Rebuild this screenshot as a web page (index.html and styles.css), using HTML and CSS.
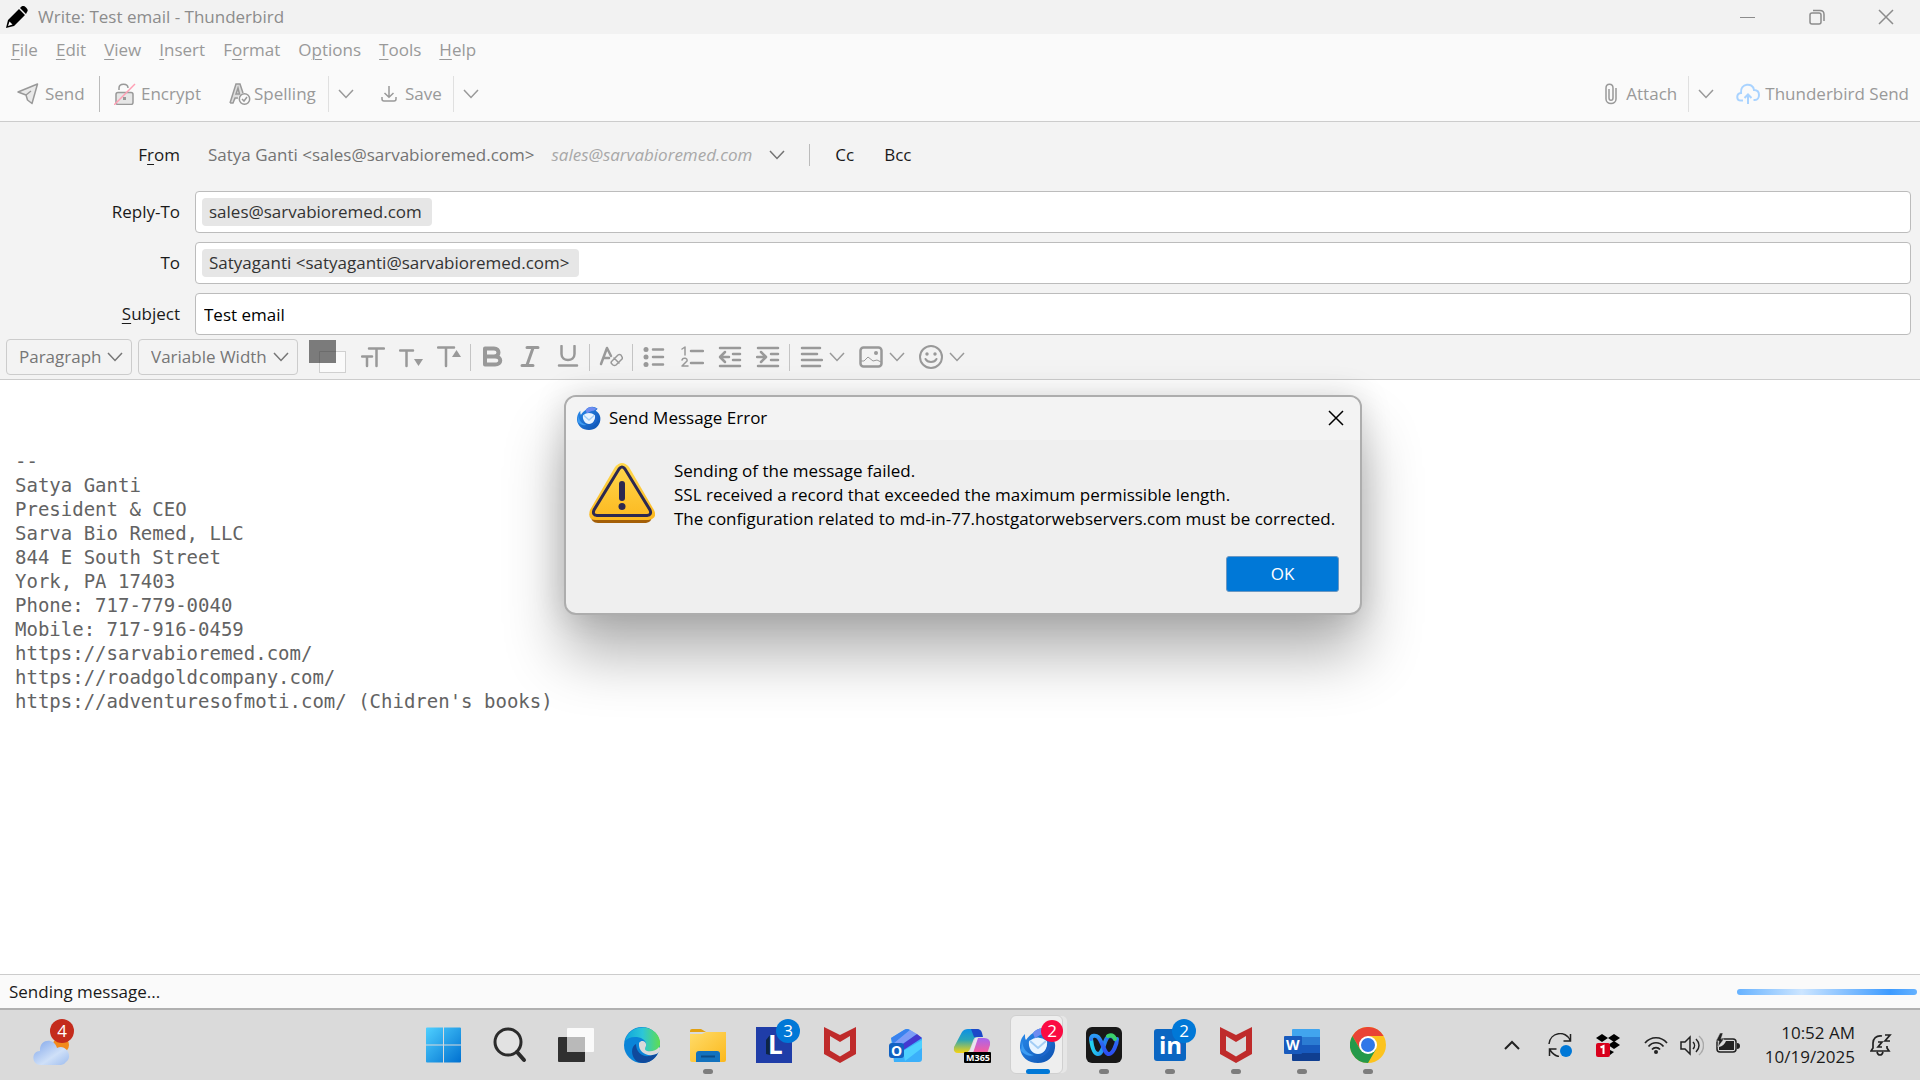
FILE: index.html
```html
<!DOCTYPE html>
<html lang="en">
<head>
<meta charset="utf-8">
<title>Write: Test email - Thunderbird</title>
<link rel="stylesheet" href="styles.css">
</head>
<body>
<svg class="defs" aria-hidden="true">
  <defs>
    <linearGradient id="tbBlue" x1="0" y1="0" x2="1" y2="1"><stop offset="0" stop-color="#2a8ef0"/><stop offset="1" stop-color="#0c4fae"/></linearGradient>
    <linearGradient id="winBlue" x1="0" y1="0" x2="1" y2="1"><stop offset="0" stop-color="#4fd0ff"/><stop offset="1" stop-color="#0070d0"/></linearGradient>
    <linearGradient id="cloudFill" x1="0" y1="0" x2="1" y2="1"><stop offset="0" stop-color="#7fa5ea"/><stop offset=".6" stop-color="#cfe0f8"/><stop offset="1" stop-color="#9dbcee"/></linearGradient>
    <linearGradient id="folderFill" x1="0" y1="0" x2="1" y2="1"><stop offset="0" stop-color="#ffdc6a"/><stop offset="1" stop-color="#fbb81c"/></linearGradient>
    <linearGradient id="edgeTop" x1="0" y1="0" x2="1" y2="0"><stop offset="0" stop-color="#0fa5dc"/><stop offset=".5" stop-color="#2cc6d8"/><stop offset="1" stop-color="#5fdd50"/></linearGradient>
    <linearGradient id="copLeft" x1="0" y1="0" x2="0" y2="1"><stop offset="0" stop-color="#0c8fe6"/><stop offset=".45" stop-color="#2aa6b8"/><stop offset="1" stop-color="#f8d40e"/></linearGradient>
    <linearGradient id="copRight" x1="0" y1="0" x2="0" y2="1"><stop offset="0" stop-color="#a565f0"/><stop offset=".6" stop-color="#ee5ea6"/><stop offset="1" stop-color="#fb9060"/></linearGradient>
    <linearGradient id="webexLeft" x1="0" y1="0" x2="1" y2="0"><stop offset="0" stop-color="#22d3ee"/><stop offset="1" stop-color="#2549ee"/></linearGradient>
    <linearGradient id="webexRight" x1="0" y1="0" x2="0" y2="1"><stop offset="0" stop-color="#2c9cf5"/><stop offset=".4" stop-color="#2c66f5"/><stop offset="1" stop-color="#2c4ff2"/></linearGradient>
    <linearGradient id="warnFill" x1="0" y1="0" x2="0" y2="1"><stop offset="0" stop-color="#ffd84e"/><stop offset="1" stop-color="#fcb81f"/></linearGradient>
  </defs>
  <symbol id="chevron" viewBox="0 0 16 10"><path d="M1 1l7 7.500 7-7.500" fill="none" stroke="currentColor" stroke-width="1.500"/></symbol>
  <symbol id="cross" viewBox="0 0 16 16"><path d="M1 1l14 14M15 1L1 15" fill="none" stroke="currentColor" stroke-width="1.500"/></symbol>
  <symbol id="thunderbird" viewBox="0 0 36 36">
    <path d="M13 6C16 2 22 0 27 2l4 2-3 3c5 3 8 8 7 14-1 9-8 15-17 15C8 36 1 30 0 21c0-6 1-10 5-14 0 3 0 5 1 6 2-3 4-5 7-7z" fill="url(#tbBlue)"/>
    <path d="M13 6c3-4 9-6 14-3l3 1-5 3c-4 0-8 2-10 5z" fill="#6f8cf0"/>
    <path d="M2 14c1 8 5 13 12 14-4 2-9 0-13-4z" fill="#3d9cf2"/>
    <path d="M9 14q9-7 18 0c1 7-3 13-9 13S8 21 9 14z" fill="#e8f4ff"/>
    <path d="M10 14l8 7 8-7" fill="none" stroke="#a3cdf5" stroke-width="2"/>
    <path d="M29 10c4 8 1 18-10 20 5-3 9-8 10-20z" fill="#1d66cc"/>
  </symbol>
  <symbol id="shield" viewBox="0 0 32 36"><path d="M0 0l16 8L32 0v27L16 36 0 27z" fill="#bf2b2b"/><path d="M6 9l10 6 10-6v14.500L16 29.500 6 23.500z" fill="#dadada"/></symbol>
</svg>

<main class="window">
  <header class="titlebar">
    <svg class="pen" viewBox="0 0 22 22"><path d="M0 22l2-8L13 3l6 6L8 20zM14 2l1.500-1.500c1-1 3-.5 4 .5l1 1c1.500 1.500 1.500 3 .5 4L20 8z"/><path d="M2 20l1.500-4.500 3 3z" fill="#fff"/></svg>
    <h1>Write: Test email - Thunderbird</h1>
    <div class="controls">
      <button aria-label="Minimize"><svg width="16" height="16" viewBox="0 0 16 16"><path d="M0 8.500h15" stroke="currentColor"/></svg></button>
      <button aria-label="Restore"><svg width="16" height="16" viewBox="0 0 16 16" fill="none" stroke="currentColor" stroke-width="1.500"><rect x="1" y="4" width="11" height="11" rx="2"/><path d="M4 1.500h7c2.500 0 4 1.500 4 4V12"/></svg></button>
      <button aria-label="Close"><svg width="16" height="16"><use href="#cross"/></svg></button>
    </div>
  </header>

  <nav class="menubar">
    <button><u>F</u>ile</button><button><u>E</u>dit</button><button><u>V</u>iew</button><button><u>I</u>nsert</button><button>F<u>o</u>rmat</button><button>O<u>p</u>tions</button><button><u>T</u>ools</button><button><u>H</u>elp</button>
  </nav>

  <div class="toolbar">
    <button class="tool send"><svg width="22" height="22" viewBox="0 0 22 22" fill="#e9e9e9" stroke="currentColor" stroke-width="1.500" stroke-linejoin="round"><path d="M1 9L20.500 1 15 20.500 10.500 17 9 12z"/><path d="M9 12l5-4" /></svg>Send</button>
    <button class="tool encrypt"><svg width="22" height="22" viewBox="0 0 22 22" fill="none" stroke="currentColor" stroke-width="1.500"><path d="M5 7V5c0-5 9-5 9 0"/><rect x="2" y="9.500" width="17" height="12" rx="2" fill="#e6e6e6"/><path d="M10.500 14v3" stroke-width="3"/><path d="M0 22L21 1" stroke="#ff9fb4"/></svg>Encrypt</button>
    <button class="tool spelling"><svg width="22" height="22" viewBox="0 0 22 22" fill="none" stroke="currentColor" stroke-width="1.500"><path d="M1 20L7 1h4l3 9M1 20h3l2-5h3M7 11l2-6 1.500 6z" fill="#ddd"/><circle cx="15.500" cy="16" r="5.200" fill="#fafafa"/><path d="M13 16l2 2 3-4"/></svg>Spelling</button>
    <button class="drop" aria-label="Spelling options"><svg class="chev"><use href="#chevron"/></svg></button>
    <button class="tool save"><svg width="16" height="16" viewBox="0 0 16 16" fill="none" stroke="currentColor" stroke-width="1.500"><path d="M8 0v11M3.500 7L8 11.200 12.500 7M1 11v2q0 2 2 2h10q2 0 2-2v-2"/></svg>Save</button>
    <button class="drop" aria-label="Save options"><svg class="chev"><use href="#chevron"/></svg></button>
    <span class="spring"></span>
    <button class="tool attach"><svg width="12" height="22" viewBox="0 0 12 22" fill="none" stroke="currentColor" stroke-width="1.500"><path d="M11 5v11c0 6-10 6-10 0V5c0-5 7-5 7 0v10c0 3-4 3-4 0V6"/></svg>Attach</button>
    <button class="drop attach-drop" aria-label="Attach options"><svg class="chev"><use href="#chevron"/></svg></button>
    <button class="tool cloud"><svg width="24" height="22" viewBox="0 0 24 22" fill="none" stroke="#a9d3ff" stroke-width="2"><path d="M7 17.500H5c-5 0-5-7 0-7.500C4 0 17 -1 18 7c7 0 6 10 1 10h-1.500M12 21V12M8.500 15l3.500-3.500 3.500 3.500"/></svg>Thunderbird Send</button>
  </div>

  <section class="addressing">
    <div class="row from">
      <label for="from">F<u>r</u>om</label>
      <div class="fromline">
        <button id="from" class="identity" aria-haspopup="listbox">Satya Ganti &lt;sales@sarvabioremed.com&gt; <i>sales@sarvabioremed.com</i><svg class="chev"><use href="#chevron"/></svg></button>
        <span class="bar"></span>
        <button class="cc">Cc</button><button class="cc">Bcc</button>
      </div>
    </div>
    <div class="row"><label for="reply">Reply-To</label><div class="field"><span class="pill">sales@sarvabioremed.com</span><input id="reply" type="text"></div></div>
    <div class="row"><label for="to">To</label><div class="field"><span class="pill">Satyaganti &lt;satyaganti@sarvabioremed.com&gt;</span><input id="to" type="text"></div></div>
    <div class="row"><label for="subject"><u>S</u>ubject</label><input class="field subject" id="subject" type="text" value="Test email"></div>
  </section>

  <div class="format">
    <div class="pick para"><select aria-label="Paragraph format"><option>Paragraph</option></select><svg class="chev"><use href="#chevron"/></svg></div>
    <div class="pick font"><select aria-label="Font"><option>Variable Width</option></select><svg class="chev"><use href="#chevron"/></svg></div>
    <button class="swatch" aria-label="Text color"><svg width="38" height="34" viewBox="0 0 38 34"><rect x="10.500" y="11.500" width="26" height="21" fill="#fafafa" stroke="#d0d0d0"/><rect width="27" height="23" fill="#7b7b7b"/><path d="M10.500 23V11.500H27" fill="none" stroke="#6c6c6c"/></svg></button>
    <button class="fmt" aria-label="Font size"><svg viewBox="0 0 24 24"><path d="M8 3.500h15M15.500 4v17M1 11.500h10M6 12v9"/></svg></button>
    <button class="fmt" aria-label="Smaller"><svg viewBox="0 0 24 24"><path d="M1 5.500h13M7.500 6v15"/><path class="solid" d="M15 14h9l-4.500 7z"/></svg></button>
    <button class="fmt" aria-label="Larger"><svg viewBox="0 0 24 24"><path d="M1 2.500h16M9 3v18"/><path class="solid" d="M15 12h9l-4.500-7z"/></svg></button>
    <span class="sep"></span>
    <button class="fmt" aria-label="Bold"><svg viewBox="0 0 24 24"><path d="M5 3.500h9c6 0 6 8 0 8H5zM5 11.500h10c7 0 7 8 0 8H5z" stroke-width="4"/></svg></button>
    <button class="fmt" aria-label="Italic"><svg viewBox="0 0 24 24"><path d="M9 2.500h11M4 20.500h11M15 3L9 20" stroke-width="3"/></svg></button>
    <button class="fmt" aria-label="Underline"><svg viewBox="0 0 24 24"><path d="M5.500 1v8c0 8 13 8 13 0V1M3 20.500h18"/></svg></button>
    <span class="sep"></span>
    <button class="fmt" aria-label="Remove styling"><svg viewBox="0 0 24 24"><path d="M2 19L8 3l4 8M5 13h5"/><path d="M13 16l6-6q1.500-1 3 0l1 2q1 1 0 2l-6 6q-1.500 1-3 0l-1.500-1.500q-1-1.200.5-2.500zM15 13l5 5" stroke-width="1.500"/></svg></button>
    <span class="sep"></span>
    <button class="fmt" aria-label="Bulleted list"><svg viewBox="0 0 24 24"><path d="M11 4.500h10M11 12h10M11 19.500h10"/><g class="solid"><circle cx="4" cy="4.500" r="2.500"/><circle cx="4" cy="12" r="2.500"/><circle cx="4" cy="19.500" r="2.500"/></g></svg></button>
    <button class="fmt" aria-label="Numbered list"><svg viewBox="0 0 24 24"><path d="M11 6h12M11 18h12"/><path d="M2 4l3-2v8M2 15c1-3 6-2 5 1l-5 5h6" stroke-width="1.500"/></svg></button>
    <button class="fmt" aria-label="Outdent"><svg viewBox="0 0 24 24"><path d="M2 3h20M15 9h7M15 15h7M2 21h20M3 12h8M7 7l-5 5 5 5"/></svg></button>
    <button class="fmt" aria-label="Indent"><svg viewBox="0 0 24 24"><path d="M2 3h20M15 9h7M15 15h7M2 21h20M1 12h8M5 7l5 5-5 5"/></svg></button>
    <span class="sep"></span>
    <button class="fmt wide" aria-label="Align"><svg viewBox="0 0 24 24"><path d="M3 3h18M3 9h15M3 15h20M3 21h18"/></svg><svg class="chev"><use href="#chevron"/></svg></button>
    <button class="fmt wide" aria-label="Insert image"><svg viewBox="0 0 24 24"><rect x="1.500" y="2.500" width="21" height="19" rx="3"/><circle class="solid" cx="17" cy="8" r="2"/><path d="M2 16h3l4-4 5 4 4-1 4 2" stroke-width="1"/></svg><svg class="chev"><use href="#chevron"/></svg></button>
    <button class="fmt wide" aria-label="Insert smiley"><svg viewBox="0 0 24 24"><circle cx="12" cy="12" r="11" stroke-width="2"/><path d="M6.500 14c2 4 9 4 11 0" stroke-width="2"/><g class="solid"><circle cx="8" cy="9" r="1.700"/><circle cx="16" cy="9" r="1.700"/></g></svg><svg class="chev"><use href="#chevron"/></svg></button>
  </div>

  <article class="message">
<pre>--
Satya Ganti
President &amp; CEO
Sarva Bio Remed, LLC
844 E South Street
York, PA 17403
Phone: 717-779-0040
Mobile: 717-916-0459
https://sarvabioremed.com/
https://roadgoldcompany.com/
https://adventuresofmoti.com/ (Chidren's books)</pre>
  </article>

  <footer class="status"><span>Sending message...</span><div class="progress" role="progressbar" aria-label="Sending"></div></footer>
</main>

<dialog class="alert" open aria-labelledby="alert-title">
  <header><svg width="26" height="24"><use href="#thunderbird"/></svg><h2 id="alert-title">Send Message Error</h2><button aria-label="Close"><svg width="16" height="16"><use href="#cross"/></svg></button></header>
  <div class="alert-body">
    <svg width="66" height="64" viewBox="0 0 66 64"><path d="M33 4L62 52q2 7-5 8H9q-7 0-7-7z" fill="#a45f07"/><path d="M26 4q7-8 14 0l25 43q4 9-6 10H7q-9 0-6-10z" fill="url(#warnFill)"/><path d="M30 6q3-4 6 0l25 41q2 5-3 5.500H8q-5-.5-3-5.500z" fill="none" stroke="#2c2850" stroke-width="3"/><path d="M33 21v14" stroke="#2c2850" stroke-width="6" stroke-linecap="round"/><circle cx="33" cy="43.500" r="3.500" fill="#2c2850"/></svg>
    <p>Sending of the message failed.<br>SSL received a record that exceeded the maximum permissible length.<br>The configuration related to md-in-77.hostgatorwebservers.com must be corrected.</p>
  </div>
  <div class="alert-actions"><button>OK</button></div>
</dialog>

<footer class="taskbar">
  <button class="weather" aria-label="Weather"><svg width="38" height="30" viewBox="0 0 38 30"><circle cx="28" cy="10" r="8" fill="#f28a1c"/><path d="M8 30C-2 30-2 16 7 16 6 4 21 2 24 13c8-5 17 8 9 14q-2 3-5 3z" fill="url(#cloudFill)"/></svg><span class="badge red">4</span></button>
  <nav class="apps">
    <button aria-label="Start"><svg width="36" height="36" viewBox="0 0 36 36"><path d="M0 1.500q0-1 1-1h16v17H0zM18 .5h16q1 0 1 1v16H18zM0 18.500h17v17H1q-1 0-1-1zM18 18.500h17v16q0 1-1 1H18z" fill="url(#winBlue)"/></svg></button>
    <button aria-label="Search"><svg width="36" height="36" viewBox="0 0 36 36" fill="none" stroke="#2b2b2b"><circle cx="16" cy="15" r="13" stroke-width="3" fill="#e2e2e2"/><path d="M25 25l7 8" stroke-width="4" stroke-linecap="round"/></svg></button>
    <button aria-label="Task view"><svg width="36" height="36" viewBox="0 0 36 36"><rect y="10" width="27" height="25" rx="1" fill="#303030"/><rect x="9" y="1" width="27" height="24" rx="1" fill="#fafafa"/><rect x="9" y="10" width="18" height="15" fill="#b9b9b9"/></svg></button>
    <button aria-label="Edge"><svg width="36" height="36" viewBox="0 0 36 36"><circle cx="18" cy="18" r="18" fill="#0a84d8"/><path d="M1 14C4 3 14-1 23 1c9 2 14 10 13 17-1 6-8 8-14 6-3-1-1-3 0-5 1-6-5-9-11-9-5 0-8 2-10 4z" fill="url(#edgeTop)"/><path d="M12 17c0 8 6 13 13 12 4-1 7-2 9-3-4 8-12 12-20 9-7-4-8-15-2-18z" fill="#104a9c"/><path d="M15 16c3-4 8-1 7 3-1 2-2 4 1 5 4 1 9 0 12-4l1 1c0 2-1 4-2 5-8 5-20 1-19-10z" fill="#dadada"/></svg></button>
    <button class="run" aria-label="File Explorer"><svg width="36" height="36" viewBox="0 0 36 36"><path d="M0 4q0-2 2-2h9l5 3H0z" fill="#e2a011"/><path d="M0 7h12l4-2h20v28q0 2-2 2H2q-2 0-2-2z" fill="url(#folderFill)"/><path d="M6 35V27q0-3 3-3h18q3 0 3 3v8z" fill="#1272be"/><path d="M11 29.500h14" stroke="#0a4c88" stroke-width="2"/></svg></button>
    <button aria-label="L"><svg width="36" height="36" viewBox="0 0 36 36"><rect width="36" height="36" fill="#1f3da8"/><path d="M10 27V13l4-5v20z" fill="#0d2545"/><text x="12" y="27" class="letter" font-size="26">L</text></svg><span class="badge blue">3</span></button>
    <button aria-label="McAfee"><svg width="32" height="36"><use href="#shield"/></svg></button>
    <button aria-label="Outlook"><svg width="36" height="36" viewBox="0 0 36 36"><path d="M3 11L16 3q3-2 6 0l12 8v21q0 3-3 3H6z" fill="#3bb0fa"/><path d="M3 11L16 3q3-2 6 0l-17 14z" fill="#3a82ee"/><path d="M5 17L22 3l7 4-20 14z" fill="#7d9cf7"/><path d="M9 21l20-14 5 4-20 13z" fill="#4538d0"/><path d="M15 24l19-11v8L17 34z" fill="#4ed0ff"/><rect x="1" y="16" width="15" height="15" rx="3" fill="#1061c2"/><text x="3" y="29" class="letter" font-size="14">O</text></svg></button>
    <button aria-label="Microsoft 365 Copilot"><svg width="38" height="36" viewBox="0 0 38 36"><path d="M9 5q2-3 6-3h9q3 0 3 4l-2 4q-4 0-5 4l-3 8q-2 4-6 4H5q-5 0-4-6z" fill="url(#copLeft)"/><path d="M18 2h6q4 0 5 4l1 4h-9z" fill="#1b48c8"/><path d="M22 11h9q7 0 6 7l-3 9q-1 5-6 5H14q3-1 4-6z" fill="url(#copRight)"/><path d="M22 11h3l-6 18h-4z" fill="#e9e4ee"/><rect x="11" y="25" width="27" height="11" rx="1" fill="#000"/><text x="13" y="34" class="letter" font-size="9">M365</text></svg></button>
    <button class="run active" aria-label="Thunderbird"><svg width="36" height="36"><use href="#thunderbird"/></svg><span class="badge crimson">2</span></button>
    <button class="run" aria-label="Webex"><svg width="36" height="36" viewBox="0 0 36 36"><rect width="36" height="36" rx="6" fill="#181818"/><g fill="none" stroke-width="4" stroke-linecap="round"><path d="M5 12C6 20 8 27 12 27c6 0 6-18 12-18 2 0 4 1 5 3" stroke="url(#webexLeft)"/><path d="M5 12c0-4 5-4 7-2 5 5 6 17 11 17 4 0 8-10 8-15" stroke="url(#webexRight)"/><path d="M22 9q5-2 7 3" stroke="#3bd26b"/></g></svg></button>
    <button class="run" aria-label="LinkedIn"><svg width="32" height="32" viewBox="0 0 32 32"><rect width="32" height="32" rx="3" fill="#0b66c2"/><text x="5" y="25" class="letter" font-size="24">in</text></svg><span class="badge blue">2</span></button>
    <button class="run" aria-label="McAfee"><svg width="32" height="36"><use href="#shield"/></svg></button>
    <button class="run" aria-label="Word"><svg width="36" height="34" viewBox="0 0 36 34"><path d="M8 9V2q0-1 1-1h26q1 0 1 1v7z" fill="#41a5ee"/><path d="M8 9h28v8H8z" fill="#2b7cd3"/><path d="M8 17h28v8H8z" fill="#185abd"/><path d="M8 25h28v7q0 1-1 1H9q-1 0-1-1z" fill="#103f91"/><rect y="8" width="18" height="18" rx="1" fill="#185abd"/><text x="2" y="22" class="letter" font-size="14">W</text></svg></button>
    <button class="run" aria-label="Chrome"><svg width="36" height="36" viewBox="0 0 36 36"><circle cx="18" cy="18" r="18" fill="#fcc31e"/><path d="M18 9h15.600A18 18 0 0 0 2.400 9l7.800 13.500z" fill="#e94335"/><path d="M2.400 9A18 18 0 0 0 18 36l7.800-13.500H10.200z" fill="#24994a"/><circle cx="18" cy="18" r="9" fill="#fff"/><circle cx="18" cy="18" r="7" fill="#3078e8"/></svg></button>
  </nav>
  <div class="tray">
    <svg class="up" width="16" height="10" viewBox="0 0 16 10" fill="none" stroke="#222" stroke-width="2"><path d="M1 9l7-7 7 7"/></svg>
    <svg class="sync" width="24" height="24" viewBox="0 0 24 24" fill="none" stroke="#222" stroke-width="1.500"><path d="M1 11C2-1 18-3 22 7M22.500 1v7h-7M2 17c2 3 5 6 9 6.500M1.500 23v-7h7"/><circle cx="18" cy="18" r="6" fill="#0078d7" stroke="none"/></svg>
    <svg class="drop-box" width="24" height="24" viewBox="0 0 24 24"><path d="M0 5l6-4 6 4-6 4zM12 5l6-4 6 4-6 4zM12 12l6-4 6 4-6 4zM14 17l4 2-4 3z"/><rect y="10" width="14" height="14" rx="2" fill="#d8001c"/><path d="M4.500 14.500l3-1.500v8" fill="none" stroke="#fff" stroke-width="2"/></svg>
    <svg class="wifi" width="24" height="24" viewBox="0 0 24 24" fill="none" stroke="#222" stroke-width="1.700"><path d="M1 10c6-7 16-7 22 0M4.500 13.500c4-5 11-5 15 0M8 16.500c2-2.500 6-2.500 8 0"/><circle cx="12" cy="19" r="2" fill="#222" stroke="none"/></svg>
    <svg class="sound" width="24" height="24" viewBox="0 0 24 24" fill="none" stroke="#222" stroke-width="1.500"><path d="M1 9h4l5-5v17l-5-5H1zM13 9c2 2 2 5 0 7M16 6c4 4 4 9 0 13"/><path d="M19 3c6 5 6 14 0 19" stroke="#aaa"/></svg>
    <svg width="24" height="24" viewBox="0 0 24 24"><rect x="1" y="6" width="19" height="13" rx="3" fill="none" stroke="#222" stroke-width="1.500"/><path d="M3 17v-3q5-1 7-6h8v9zM21 10q3 0 3 3t-3 3z" fill="#222"/><path d="M4 0L0 8h3l-1 6 6-8H5l2-6z" fill="#222" stroke="#dadada" stroke-width=".5"/></svg>
    <time datetime="2025-10-19T10:52">10:52 AM<br>10/19/2025</time>
    <svg width="22" height="22" viewBox="0 0 22 22" fill="none" stroke="#222" stroke-width="1.700"><path d="M12 2C6 1 3 5 3 9v5l-2 3h18l-2-3v-2M7 18c1 4 5 4 6 0M8 8h4l-4 5h4M15 1h5l-5 6h5"/></svg>
  </div>
</footer>
</body>
</html>
```

FILE: styles.css
```css
* { box-sizing: border-box; }

body {
  margin: 0;
  min-height: 100vh;
  display: flex;
  flex-direction: column;
  font: 17px/24px "Open Sans", "Noto Sans", sans-serif;
  color: #1a1a1a;
  background: #fff;
}

.defs { position: absolute; width: 0; height: 0; }

svg { flex: none; display: block; }

button, input, select {
  font: inherit;
  color: inherit;
  background: none;
  border: 0;
  padding: 0;
  margin: 0;
}

u { text-underline-offset: 3px; text-decoration-thickness: 1px; }

.chev { width: 16px; height: 10px; }

.window { flex: 1; display: flex; flex-direction: column; }

.titlebar {
  height: 34px;
  display: flex;
  align-items: center;
  padding-left: 6px;
  background: #f2f2f2;
  color: #8c8c8c;
}
.titlebar h1 { margin: 0 auto 0 10px; font-size: 17px; font-weight: 400; }
.pen { width: 22px; height: 22px; }
.controls { display: flex; }
.controls button { width: 69px; height: 34px; display: grid; place-items: center; }

.menubar {
  height: 32px;
  display: flex;
  align-items: center;
  gap: 18px;
  padding-left: 11px;
  background: #fafafa;
  color: #999;
}

.toolbar {
  height: 56px;
  display: flex;
  align-items: center;
  padding-right: 11px;
  background: #fafafa;
  border-bottom: 1px solid #ccc;
  color: #999;
}
.tool { height: 36px; display: flex; align-items: center; gap: 6px; }
.send { width: 100px; padding-left: 17px; border-right: 1px solid #bbb; }
.encrypt { width: 129px; padding-left: 14px; gap: 5px; }
.spelling { width: 99px; gap: 3px; }
.save { width: 80px; padding-left: 8px; gap: 8px; }
.attach { width: 83px; gap: 9px; }
.cloud { gap: 5px; }
.drop { width: 45px; height: 36px; padding-left: 9px; border-left: 1px solid #e0e0e0; }
.attach-drop { width: 48px; }
.spring { flex: 1; }

.addressing {
  display: flex;
  flex-direction: column;
  gap: 9px;
  padding-right: 9px;
  background: #f3f3f3;
}
.row { display: grid; grid-template-columns: 180px 1fr; gap: 15px; align-items: center; }
.row label { text-align: right; }
.from { height: 60px; padding-top: 6px; }
.fromline { display: flex; align-items: center; padding-left: 13px; }
.identity { display: flex; align-items: center; color: #737373; }
.identity i { margin: 0 17px; color: #a8a8a8; }
.bar { width: 1px; height: 22px; margin: 0 25px 0 24px; background: #bbb; }
.cc { margin-right: 30px; }
.field {
  height: 42px;
  min-width: 0;
  display: flex;
  align-items: center;
  padding: 0 6px;
  background: #fff;
  border: 1px solid #bcbcbc;
  border-radius: 4px;
}
.field input { flex: 1; min-width: 0; outline: 0; }
.subject { padding: 0 8px; color: #000; }
.pill { padding: 2px 10px 2px 7px; border-radius: 4px; background: #e6e6e6; color: #333; }

.format {
  height: 45px;
  display: flex;
  align-items: center;
  padding-left: 6px;
  background: #f3f3f3;
  border-bottom: 1px solid #ccc;
  color: #999;
}
.pick { display: grid; align-items: center; margin-right: 6px; color: #767676; }
.pick select {
  grid-area: 1 / 1;
  width: 100%;
  height: 36px;
  padding-left: 12px;
  appearance: none;
  border: 1px solid #ccc;
  border-radius: 4px;
}
.pick .chev { grid-area: 1 / 1; justify-self: end; margin-right: 9px; pointer-events: none; }
.para { width: 126px; }
.font { width: 160px; }
.swatch { margin: 0 7px 0 5px; }
.fmt { width: 38px; height: 38px; display: flex; align-items: center; justify-content: center; }
.fmt svg:first-child { width: 24px; height: 24px; fill: none; stroke: #999; stroke-width: 2.5; stroke-linecap: round; stroke-linejoin: round; }
.fmt .solid { fill: #999; stroke: none; }
.wide { width: 60px; gap: 6px; }
.sep { width: 1px; height: 27px; margin: 0 2px; background: #c4c4c4; }

.message { flex: 1; padding: 69px 15px 0; background: #fff; }
.message pre { margin: 0; font: 19px/24px "DejaVu Sans Mono", monospace; color: #636363; }

.status {
  height: 36px;
  display: flex;
  align-items: center;
  justify-content: space-between;
  padding: 1px 3px 0 9px;
  background: #fafafa;
  border-top: 1px solid #ccc;
  border-bottom: 2px solid #b0b0b0;
}
.progress {
  width: 180px;
  height: 6px;
  border-radius: 3px;
  background: linear-gradient(90deg, #66b2ff, #cce5ff 36%, #3d9bff 85%, #66b2ff);
}

.alert {
  position: absolute;
  left: 564px;
  top: 395px;
  margin: 0;
  padding: 0 0 21px;
  width: 798px;
  color: #000;
  background: #efefef;
  border: 2px solid #adadad;
  border-radius: 12px;
  box-shadow: 0 40px 60px rgba(0, 0, 0, .3), 0 0 32px rgba(0, 0, 0, .14);
}
.alert header {
  height: 43px;
  display: flex;
  align-items: center;
  padding: 0 16px 2px 10px;
  background: #f3f3f3;
  border-radius: 10px 10px 0 0;
}
.alert h2 { margin: 0 auto 0 7px; font-size: 17px; font-weight: 400; }
.alert-body { display: flex; gap: 19px; padding: 19px 0 0 23px; align-items: center; }
.alert-body p { margin: 0; white-space: nowrap; }
.alert-actions { display: flex; justify-content: flex-end; padding: 25px 21px 0; }
.alert-actions button {
  width: 113px;
  height: 36px;
  color: #fff;
  background: #0078d7;
  border: 1px solid #6a97c2;
  border-radius: 3px;
}

.taskbar { height: 70px; display: flex; align-items: center; padding-bottom: 1px; background: #dadada; }
.weather { position: relative; width: 411px; height: 48px; padding: 10px 0 0 33px; }
.apps { display: flex; }
.apps button { position: relative; width: 66px; height: 60px; display: grid; place-items: center; }
.run::after {
  content: "";
  position: absolute;
  bottom: 1px;
  left: 28px;
  width: 10px;
  height: 5px;
  border-radius: 3px;
  background: #7d7d7d;
}
.active::before {
  content: "";
  position: absolute;
  inset: 0 8px 1px 5px;
  z-index: -1;
  border: 1px solid #d0d0d0;
  border-radius: 6px;
  background: #eee;
  box-shadow: 5px 0 0 -1px #e6e6e6;
}
.active { z-index: 0; }
.active::after { left: 21px; width: 24px; background: #0078d7; }
.letter { fill: #fff; font-family: "Open Sans", sans-serif; font-weight: 700; }
.badge {
  position: absolute;
  top: 4px;
  right: 7px;
  width: 24px;
  height: 24px;
  border-radius: 50%;
  color: #fff;
}
.blue { background: #0078d7; }
.crimson { top: 5px; right: 8px; width: 22px; height: 22px; line-height: 22px; background: #fb0a42; }
.red { top: -2px; left: 50px; background: #c42b1c; }

.tray { flex: 1; display: flex; align-items: center; justify-content: flex-end; gap: 12px; padding-right: 28px; }
.up { margin-right: 16px; }
.sync, .drop-box { margin-right: 12px; }
.tray time { width: 103px; margin-right: 3px; text-align: right; white-space: nowrap; }
```
